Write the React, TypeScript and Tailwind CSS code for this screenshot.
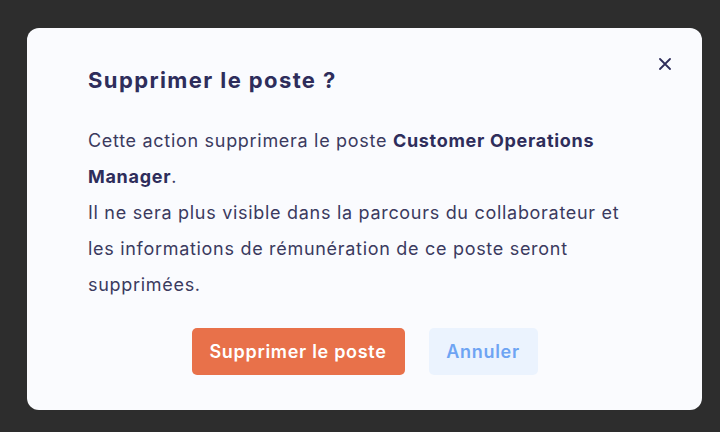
import React from 'react';

const App: React.FC = () => {
  return (
    <div className="min-h-screen w-full bg-[#2d2d2d] pt-[28px] pl-[27px]" style={{ fontFamily: 'Inter, "Open Sans", sans-serif' }}>
      <div className="relative w-[675px] h-[382px] bg-[#fafbfe] rounded-[12px] pt-[38px] pl-[61px] pr-[61px]">
        <button className="absolute top-[29px] right-[30px] w-[14px] h-[14px] flex items-center justify-center text-[#2e2d5b]">
          <svg width="12" height="12" viewBox="0 0 12 12" fill="none" stroke="currentColor" strokeWidth="1.8" strokeLinecap="round">
            <path d="M1 1L11 11M11 1L1 11" />
          </svg>
        </button>
        <h2 className="text-[22px] leading-[28px] font-bold tracking-[1.4px] text-[#2e2d5b]">Supprimer le poste ?</h2>
        <p className="mt-[29px] text-[18px] leading-[36px] tracking-[0.7px] text-[#3b3a5e]">
          Cette action supprimera le poste <strong className="font-bold text-[#2e2d5b]">Customer Operations Manager</strong>.
          <br />
          Il ne sera plus visible dans la parcours du collaborateur et les informations de rémunération de ce poste seront supprimées.
        </p>
        <div className="mt-[25px] flex justify-center gap-[24px]">
          <button className="h-[47px] w-[213px] rounded-[5px] bg-[#e8714a] text-white text-[18px] font-semibold tracking-[0.7px]">
            Supprimer le poste
          </button>
          <button className="h-[47px] w-[109px] rounded-[5px] bg-[#ebf3fe] text-[#6ea4f3] text-[18px] font-semibold tracking-[0.7px]">
            Annuler
          </button>
        </div>
      </div>
    </div>
  );
};

export default App;
